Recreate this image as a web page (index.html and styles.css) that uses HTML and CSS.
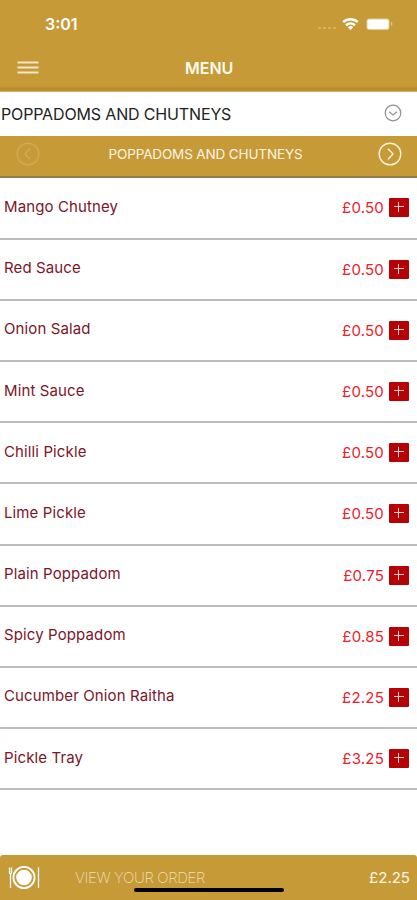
FILE: index.html
```html
<!DOCTYPE html>
<html lang="en">
<head>
<meta charset="utf-8">
<title>Menu</title>
<link rel="stylesheet" href="styles.css">
</head>
<body>
<div class="app">
  <header class="top">
    <div class="status">
      <span class="time">3:01</span>
      <svg class="status-icons" width="76" height="16" viewBox="0 0 76 16">
        <path d="M1 12h18" stroke="#d8b873" stroke-width="1.600" stroke-dasharray="3 2"/>
        <g fill="none" stroke="#fff" stroke-width="2.5">
          <path d="M26.2 6.2a10.8 10.8 0 0 1 14.6 0"/>
          <path d="M29 9.3a6.8 6.8 0 0 1 9 0"/>
        </g>
        <path d="M30.8 11.3a4 4 0 0 1 5.4 0l-2.7 2.8z" fill="#fff"/>
        <rect x="49.5" y="2.5" width="23" height="11.5" rx="3" fill="#e3cc95"/>
        <rect x="50.5" y="3.5" width="21" height="9.5" rx="1.5" fill="#fff"/>
        <path d="M74 6v4q1.500-.5 1.500-2t-1.500-2" fill="#e3cc95"/>
      </svg>
    </div>
    <div class="nav">
      <svg class="burger" width="22" height="14" viewBox="0 0 22 14"><path d="M.5 1.500h21M.5 6.500h21M.5 11.500h21" stroke="#f5e6c8" stroke-width="2.200"/></svg>
      <h1>MENU</h1>
    </div>
  </header>
  <div class="select">
    <span>POPPADOMS AND CHUTNEYS</span>
    <svg width="18" height="18" viewBox="0 0 18 18" fill="none" stroke="#929292" stroke-width="1.2"><circle cx="9" cy="9" r="7.800"/><path d="M5.200 7.700 9 10.900l3.800-3.200"/></svg>
  </div>
  <div class="category">
    <svg class="prev" width="24" height="24" viewBox="0 0 24 24" fill="none" stroke="#d0aa56" stroke-width="1.400"><circle cx="12" cy="12" r="10.800"/><path d="m14 6.800-5 5.200 5 5.200"/></svg>
    <span>POPPADOMS AND CHUTNEYS</span>
    <svg class="next" width="24" height="24" viewBox="0 0 24 24" fill="none" stroke="#fff3dc" stroke-width="1.400"><circle cx="12" cy="12" r="10.800"/><path d="m10 6.800 5 5.200-5 5.200"/></svg>
  </div>
  <ul class="items">
    <li><span class="name">Mango Chutney</span><span class="price">£0.50</span><i class="add"></i></li>
    <li><span class="name">Red Sauce</span><span class="price">£0.50</span><i class="add"></i></li>
    <li><span class="name">Onion Salad</span><span class="price">£0.50</span><i class="add"></i></li>
    <li><span class="name">Mint Sauce</span><span class="price">£0.50</span><i class="add"></i></li>
    <li><span class="name">Chilli Pickle</span><span class="price">£0.50</span><i class="add"></i></li>
    <li><span class="name">Lime Pickle</span><span class="price">£0.50</span><i class="add"></i></li>
    <li><span class="name">Plain Poppadom</span><span class="price">£0.75</span><i class="add"></i></li>
    <li><span class="name">Spicy Poppadom</span><span class="price">£0.85</span><i class="add"></i></li>
    <li><span class="name">Cucumber Onion Raitha</span><span class="price">£2.25</span><i class="add"></i></li>
    <li><span class="name">Pickle Tray</span><span class="price">£3.25</span><i class="add"></i></li>
  </ul>
  <footer class="order">
    <svg class="plate" width="32" height="24" viewBox="0 0 32 24">
      <circle cx="16" cy="11.500" r="10.600" fill="none" stroke="#fff" stroke-width="1.800"/>
      <circle cx="16" cy="11.500" r="7.800" fill="#fff"/>
      <path d="M1.500 1.500v5q0 1.500 1 1.500t1-1.500v-5M2.500 7V22M30.500 1.500V22" fill="none" stroke="#fff" stroke-width="1.300"/>
    </svg>
    <span class="view">VIEW YOUR ORDER</span>
    <span class="total">£2.25</span>
    <div class="home"></div>
  </footer>
</div>
</body>
</html>
```
FILE: styles.css
```css
* { box-sizing: border-box; }
body { margin: 0; background: #fff; font-family: Inter, "Liberation Sans", sans-serif; }
.app { width: 417px; height: 900px; display: flex; flex-direction: column; overflow: hidden; }
.top { height: 92px; background: linear-gradient(#c59a37 86px, #b58b2d 89px, #bd922f 91px, #e6d3a5 92px); }
.status { height: 46px; padding: 16px 24px 0 45px; display: flex; justify-content: space-between; align-items: flex-start; color: #fff; }
.time { font-size: 16px; font-weight: 600; line-height: 17px; letter-spacing: 0; }
.status-icons { display: block; }
.nav { height: 43px; display: flex; align-items: center; padding-left: 17px; }
.nav h1 { margin: 0 0 0 146px; color: #fffaf0; font-size: 16px; line-height: 20px; font-weight: 600; letter-spacing: 0; }
.select { height: 44px; display: flex; justify-content: space-between; align-items: center; padding: 0 15px 0 1px; font-size: 16px; letter-spacing: -.15px; color: #222; }
.select svg { margin-bottom: 2px; }
.category { height: 42px; background: #c59a37; border-bottom: 2px solid #927c4c; display: flex; justify-content: space-between; align-items: center; padding: 0 15px 5px 16px; font-size: 13.5px; letter-spacing: -.14px; color: #fff5e2; }
.category span { margin-right: 7px; }
.items { list-style: none; margin: 0; padding: .4px 0 0; }
.items li { height: 61.2px; border-bottom: 2px solid #bdbdbd; display: flex; align-items: center; padding: 0 8px 0 4px; }
.name { flex: 1; margin-bottom: 3px; font-size: 15px; letter-spacing: .12px; color: #7b1527; }
.price { font-size: 15px; letter-spacing: .2px; color: #ed2029; margin-right: 5px; }
.add { width: 20px; height: 19px; border-radius: 1px; background: linear-gradient(#f4d5d5, #f4d5d5) 50% 8px / 10px 1px no-repeat, linear-gradient(#f4d5d5, #f4d5d5) 9px 4px / 1px 10px no-repeat, #b60205; }
.order { position: relative; height: 45px; margin-top: auto; border-radius: 3px 3px 0 0; background: #c59a37; display: flex; align-items: center; padding: 0 7px 0 8px; }
.view { margin-left: 35px; font-size: 15px; font-weight: 200; letter-spacing: -.38px; color: #f0dfb8; }
.total { margin-left: auto; font-size: 15px; color: #fff5e2; }
.home { position: absolute; left: 134px; top: 33px; width: 150px; height: 4px; border-radius: 2px; background: #000; }
```
